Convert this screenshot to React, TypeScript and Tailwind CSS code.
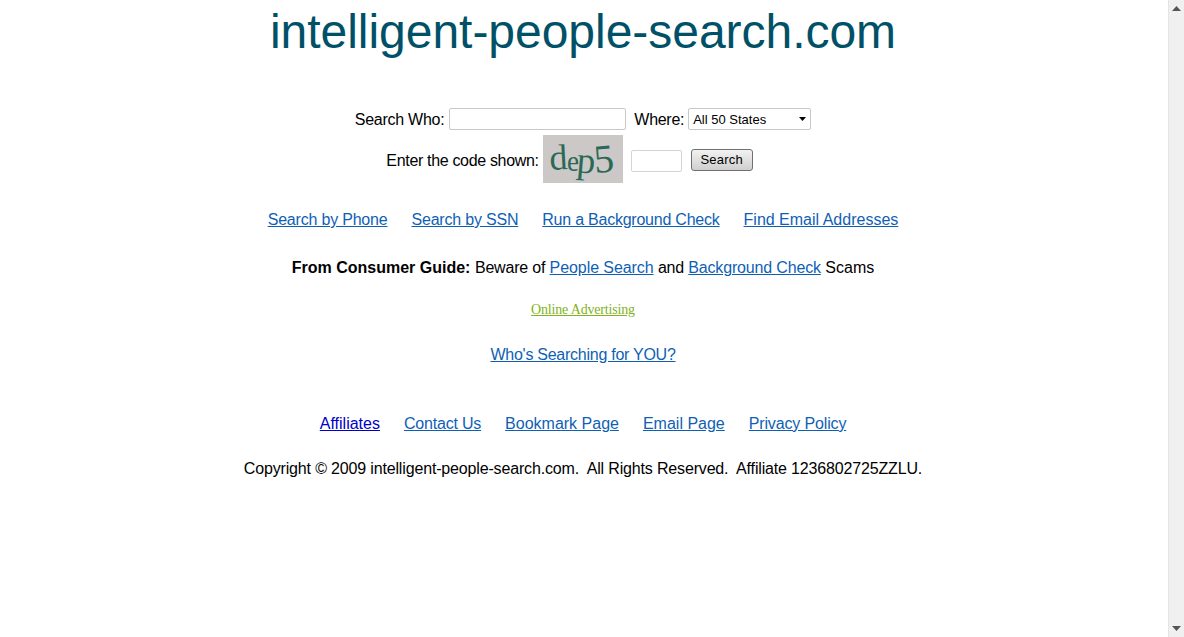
import React from 'react';

const linkCls = 'text-[#0f5fb5] underline';

function Captcha() {
  return (
    <svg width="80" height="48" viewBox="0 0 80 48" className="block bg-[#cdc8c8]">
      <g fill="#2a6a55" fontFamily="'Liberation Serif', serif">
        <text x="7" y="35" fontSize="36" transform="rotate(-3 7 35)">d</text>
        <text x="24" y="36" fontSize="30" textLength="12" lengthAdjust="spacingAndGlyphs">e</text>
        <text x="33" y="37" fontSize="37" transform="rotate(5 33 37)">p</text>
        <text x="52" y="38" fontSize="40" transform="rotate(-5 52 38)">5</text>
      </g>
    </svg>
  );
}

function Scrollbar() {
  return (
    <div className="flex w-4 shrink-0 flex-col items-center justify-between bg-[#f0f0f0] border-l border-[#e4e4e4] py-[6px]">
      <svg width="9" height="5" viewBox="0 0 9 5"><path d="M4.5 0 9 5H0z" fill="#555" /></svg>
      <svg width="9" height="5" viewBox="0 0 9 5"><path d="M0 0h9L4.5 5z" fill="#555" /></svg>
    </div>
  );
}

export default function App() {
  return (
    <div className="flex h-[637px] overflow-hidden bg-white text-black font-['Liberation_Sans',Arial,sans-serif] text-base">
      <main className="flex flex-1 flex-col items-center pr-[2px]">
        <h1 className="text-[48px] leading-[55px] mt-[4px] font-normal tracking-[-0.03px] text-[#005168]">intelligent-people-search.com</h1>

        <form className="mt-[49px] flex items-center h-[22px]">
          <span className="mt-[2px] tracking-[-0.27px]">Search Who:</span>
          <input className="ml-[5px] w-[177px] h-[22px] border border-[#c8c8c8] rounded-[2px] bg-white" />
          <span className="ml-[8px] mt-[2px] tracking-[-0.3px]">Where:</span>
          <div className="ml-[4px] w-[123px] h-[22px] border border-[#c8c8c8] rounded-[2px] flex items-center justify-between pl-[4px] pr-[4px] text-[13px]">
            <span className="mt-[2px]">All 50 States</span>
            <svg width="7" height="4" viewBox="0 0 7 4"><path d="M0 0h7L3.5 4z" fill="#000" /></svg>
          </div>
        </form>

        <div className="mt-[5px] mr-[27px] flex items-center h-[48px]">
          <span className="mt-[4px] tracking-[-0.33px]">Enter the code shown:</span>
          <div className="ml-[4px]"><Captcha /></div>
          <input className="ml-[8px] mt-[4px] w-[51px] h-[22px] border border-[#d4d4d4] rounded-[2px] bg-white" />
          <button type="button" className="ml-[9px] mt-[2px] w-[62px] h-[22px] border border-[#707070] rounded-[3px] bg-gradient-to-b from-[#f2f2f2] to-[#cfcfcf] text-[13px] leading-[18px] tracking-[0.2px]">Search</button>
        </div>

        <nav className="mt-[27px] flex gap-[24px] leading-[20px]">
          <a className={`${linkCls} tracking-[-0.2px]`}>Search by Phone</a>
          <a className={`${linkCls} tracking-[-0.2px]`}>Search by SSN</a>
          <a className={`${linkCls} tracking-[-0.23px]`}>Run a Background Check</a>
          <a className={linkCls}>Find Email Addresses</a>
        </nav>

        <p className="mt-[28px] leading-[20px]">
          <b>From Consumer Guide:</b> <span className="tracking-[-0.2px]">Beware of</span> <a className={`${linkCls} tracking-[-0.08px]`}>People Search</a> <span className="tracking-[-0.3px]">and</span> <a className={`${linkCls} tracking-[-0.16px]`}>Background Check</a> Scams
        </p>

        <a className="mt-[24px] leading-[16px] text-[14px] tracking-[-0.17px] text-[#7fb31c] underline font-['Liberation_Serif',serif]">Online Advertising</a>

        <a className={`mt-[27px] leading-[20px] tracking-[-0.26px] ${linkCls}`}>Who's Searching for YOU?</a>

        <nav className="mt-[49px] flex gap-[24px] leading-[20px]">
          <a className="text-[#0000c8] underline">Affiliates</a>
          <a className={`${linkCls} tracking-[-0.2px]`}>Contact Us</a>
          <a className={linkCls}>Bookmark Page</a>
          <a className={linkCls}>Email Page</a>
          <a className={`${linkCls} tracking-[-0.15px]`}>Privacy Policy</a>
        </nav>

        <p className="mt-[25px] leading-[20px] whitespace-pre tracking-[-0.16px]">Copyright © 2009 intelligent-people-search.com.  All Rights Reserved.  Affiliate 1236802725ZZLU.</p>
      </main>
      <Scrollbar />
    </div>
  );
}
